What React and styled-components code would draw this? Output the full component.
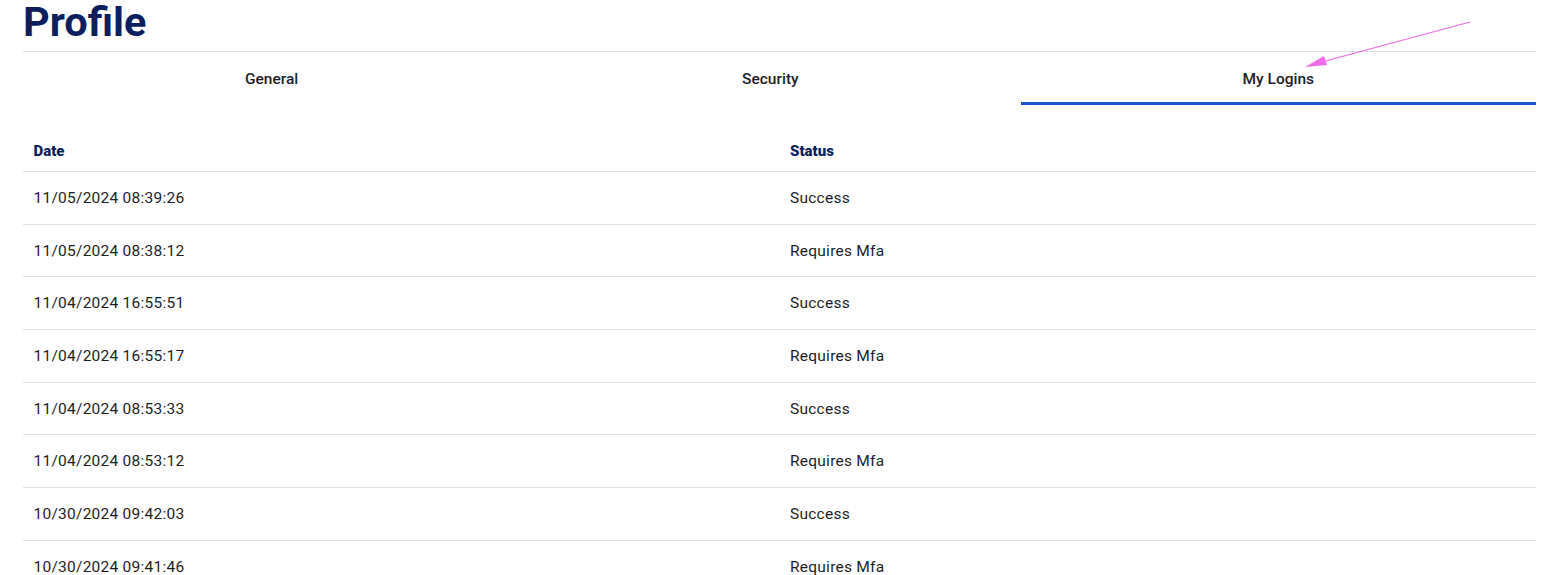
import React from 'react';
import styled, { createGlobalStyle } from 'styled-components';

const GlobalStyle = createGlobalStyle`
  html, body {
    margin: 0;
    padding: 0;
    background: #fff;
    font-family: Roboto, "Liberation Sans", sans-serif;
  }
`;

const Page = styled.div`
  position: relative;
  padding: 0 9px 0 23px;
`;

const Title = styled.h1`
  margin: 0;
  font-size: 41.5px;
  line-height: 44px;
  font-weight: 700;
  color: #0b1f5e;
  height: 51px;
`;

const Tabs = styled.div`
  display: flex;
  border-top: 1px solid #e0e0e0;
`;

const Tab = styled.div`
  flex: 1 1 auto;
  height: 53px;
  display: flex;
  align-items: center;
  justify-content: center;
  font-size: 15.5px;
  font-weight: 500;
  color: #1c1d2b;
  box-sizing: border-box;
  border-bottom: 3px solid ${p => (p.$active ? '#1b55c9' : 'transparent')};
  padding-top: 3px;
`;

const Table = styled.div`
  margin-top: 26px;
`;

const Row = styled.div`
  display: grid;
  grid-template-columns: 1fr 1fr;
  height: ${p => (p.$head ? '41px' : '52.7px')};
  border-bottom: ${p => (p.$last ? 'none' : '1px solid #e2e2e2')};
  box-sizing: border-box;
`;

const Cell = styled.div`
  display: flex;
  align-items: center;
  padding: 0 10px 0 10.5px;
  font-size: ${p => (p.$head ? '15px' : '15.5px')};
  letter-spacing: ${p => (p.$head ? '0' : '0.25px')};
  color: ${p => (p.$head ? '#0b1f5e' : '#1d1d27')};
  font-weight: ${p => (p.$head ? 900 : 400)};
`;

const Arrow = styled.svg`
  position: absolute;
  left: 1300px;
  top: 18px;
  pointer-events: none;
`;

const logins = [
  ['11/05/2024 08:39:26', 'Success'],
  ['11/05/2024 08:38:12', 'Requires Mfa'],
  ['11/04/2024 16:55:51', 'Success'],
  ['11/04/2024 16:55:17', 'Requires Mfa'],
  ['11/04/2024 08:53:33', 'Success'],
  ['11/04/2024 08:53:12', 'Requires Mfa'],
  ['10/30/2024 09:42:03', 'Success'],
  ['10/30/2024 09:41:46', 'Requires Mfa'],
];

export default function App() {
  return (
    <Page>
      <GlobalStyle />
      <Title>Profile</Title>
      <Tabs>
        <Tab>General</Tab>
        <Tab>Security</Tab>
        <Tab $active>My Logins</Tab>
      </Tabs>
      <Table>
        <Row $head>
          <Cell $head>Date</Cell>
          <Cell $head>Status</Cell>
        </Row>
        {logins.map(([date, status], i) => (
          <Row key={i} $last={i === logins.length - 1}>
            <Cell>{date}</Cell>
            <Cell>{status}</Cell>
          </Row>
        ))}
      </Table>
      <Arrow width="180" height="60" viewBox="0 0 180 60">
        <line x1="170" y1="4" x2="18" y2="45" stroke="#f06be8" strokeWidth="1.2" />
        <polygon points="5,49 24,38 27,47" fill="#f06be8" />
      </Arrow>
    </Page>
  );
}
